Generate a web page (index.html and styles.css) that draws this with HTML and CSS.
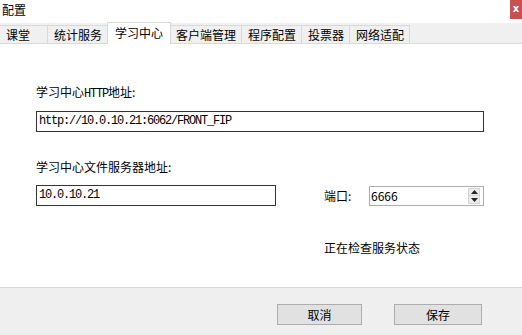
FILE: index.html
```html
<!DOCTYPE html>
<html lang="zh-CN">
<head>
    <meta charset="UTF-8">
    <title>配置</title>
    <link rel="stylesheet" href="styles.css">
</head>
<body>
    <div class="window">
        <div class="titlebar">
            <span class="title">配置</span>
            <span class="close">x</span>
        </div>

        <div class="tabs">
            <div class="tab tab-first">课堂</div>
            <div class="tab">统计服务</div>
            <div class="tab active">学习中心</div>
            <div class="tab">客户端管理</div>
            <div class="tab">程序配置</div>
            <div class="tab">投票器</div>
            <div class="tab">网络适配</div>
        </div>

        <div class="panel">
            <div class="label label-http">学习中心<span class="latin">HTTP</span>地址:</div>
            <div class="textbox wide">http://10.0.10.21:6062/FRONT_FIP</div>

            <div class="label label-file">学习中心文件服务器地址:</div>
            <div class="row">
                <div class="textbox short">10.0.10.21</div>
                <span class="port-label">端口:</span>
                <div class="spinner">
                    <span class="spin-value">6666</span>
                    <div class="spin-buttons">
                        <div class="spin-btn">
                            <svg width="7" height="4" viewBox="0 0 7 4"><path d="M0 4 L3.5 0 L7 4 Z" fill="#222"/></svg>
                        </div>
                        <div class="spin-btn">
                            <svg width="7" height="4" viewBox="0 0 7 4"><path d="M0 0 L7 0 L3.5 4 Z" fill="#222"/></svg>
                        </div>
                    </div>
                </div>
            </div>

            <div class="status">正在检查服务状态</div>
        </div>

        <div class="footer">
            <button class="btn btn-cancel">取消</button>
            <button class="btn btn-save">保存</button>
        </div>
    </div>
</body>
</html>
```

FILE: styles.css
```css
* {
    box-sizing: border-box;
}

body {
    margin: 0;
    font-family: "Noto Sans CJK SC", "Noto Sans", sans-serif;
    font-size: 12px;
    color: #000;
    background: #fff;
}

.window {
    width: 522px;
    height: 335px;
    display: flex;
    flex-direction: column;
}

.titlebar {
    height: 23px;
    display: flex;
    justify-content: space-between;
    align-items: flex-start;
    background: #fff;
}

.title {
    margin: 2px 0 0 2px;
    line-height: 16px;
}

.close {
    width: 12px;
    height: 19px;
    background: #c75050;
    color: #fff;
    font-family: "DejaVu Sans", sans-serif;
    font-weight: bold;
    font-size: 10px;
    line-height: 17px;
    text-align: center;
}

.tabs {
    height: 21px;
    display: flex;
    align-items: flex-end;
    background: #f0f0f0;
    border-bottom: 1px solid #d9d9d9;
}

.tab {
    height: 19px;
    padding: 0 5px 0 6px;
    margin-bottom: -1px;
    border: 1px solid #d9d9d9;
    border-left: none;
    background: #f0f0f0;
    line-height: 17px;
    white-space: nowrap;
}

.tab-first {
    width: 48px;
    border-left: none;
}

.tab.active {
    height: 22px;
    padding: 0 7px 0 7px;
    margin-left: -1px;
    margin-right: -1px;
    background: #fff;
    border-left: 1px solid #d9d9d9;
    border-bottom: none;
    line-height: 20px;
    position: relative;
}

.panel {
    flex: 1;
    background: #fff;
    padding: 0 38px 0 36px;
}

.label {
    line-height: 16px;
}

.label-http {
    margin-top: 40px;
}

.latin {
    font-family: "Liberation Mono", monospace;
    font-size: 12px;
    letter-spacing: -1.2px;
}

.label-file {
    margin-top: 27px;
}

.textbox {
    height: 21px;
    border: 1px solid #333;
    padding-left: 2px;
    font-family: "Liberation Mono", monospace;
    font-size: 12px;
    letter-spacing: -1.2px;
    line-height: 19px;
}

.wide {
    width: 448px;
    margin-top: 9px;
}

.row {
    display: flex;
    align-items: center;
    margin-top: 10px;
}

.short {
    width: 240px;
}

.port-label {
    margin-left: 48px;
    width: 45px;
}

.spinner {
    width: 115px;
    height: 20px;
    margin-top: 1px;
    border: 1px solid #adadad;
    display: flex;
    justify-content: space-between;
    align-items: center;
}

.spin-value {
    padding-left: 1px;
    line-height: 18px;
}

.spin-buttons {
    display: flex;
    flex-direction: column;
    margin-right: 3px;
}

.spin-btn {
    width: 12px;
    height: 8px;
    background: #ececec;
    border: 1px solid #d4d4d4;
    display: flex;
    align-items: center;
    justify-content: center;
}

.spin-btn + .spin-btn {
    border-top: none;
}

.status {
    margin: 34px 0 0 288px;
    line-height: 16px;
}

.footer {
    height: 48px;
    background: #efefef;
    border-top: 1px solid #d8d8d8;
    display: flex;
    justify-content: flex-end;
    align-items: flex-start;
    padding: 16px 40px 0 0;
    gap: 32px;
}

.btn {
    height: 21px;
    background: #e1e1e1;
    border: 1px solid #adadad;
    font-family: "Noto Sans CJK SC", sans-serif;
    font-size: 12px;
    line-height: 17px;
    padding: 0;
    color: #000;
}

.btn-cancel {
    width: 85px;
}

.btn-save {
    width: 88px;
}
```
